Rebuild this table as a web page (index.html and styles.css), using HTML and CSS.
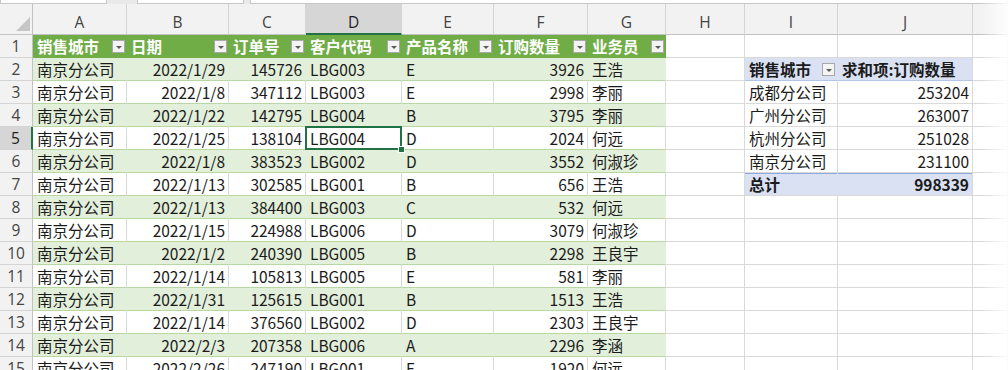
FILE: index.html
```html
<!DOCTYPE html>
<html lang="zh">
<head>
<meta charset="utf-8">
<title>Sheet</title>
<link rel="stylesheet" href="styles.css">
</head>
<body>
<div class="topbar">
  <div class="box b1"></div>
  <div class="gap g1"></div>
  <div class="box b2"></div>
  <div class="gap g2"></div>
  <div class="box b3"></div>
</div>
<div class="sheet">
  <div class="row hdr">
    <div class="corner"><span class="tri"></span></div>
    <div class="ch">A</div>
    <div class="ch">B</div>
    <div class="ch">C</div>
    <div class="ch act">D</div>
    <div class="ch">E</div>
    <div class="ch">F</div>
    <div class="ch">G</div>
    <div class="ch">H</div>
    <div class="ch">I</div>
    <div class="ch">J</div>
    <div class="ch last"></div>
  </div>

  <div class="row head">
    <div class="rh">1</div>
    <div class="t th">销售城市<span class="fb"></span></div>
    <div class="t th">日期<span class="fb"></span></div>
    <div class="t th">订单号<span class="fb"></span></div>
    <div class="t th">客户代码<span class="fb"></span></div>
    <div class="t th">产品名称<span class="fb"></span></div>
    <div class="t th">订购数量<span class="fb"></span></div>
    <div class="t th">业务员<span class="fb"></span></div>
    <div class="c"></div><div class="c"></div><div class="c"></div><div class="c"></div>
  </div>

  <div class="row g">
    <div class="rh">2</div>
    <div class="t">南京分公司</div><div class="t n">2022/1/29</div><div class="t n">145726</div><div class="t">LBG003</div><div class="t">E</div><div class="t n">3926</div><div class="t">王浩</div>
    <div class="c"></div>
    <div class="c pv ph">销售城市<span class="fb"></span></div>
    <div class="c pv ph">求和项:订购数量</div>
    <div class="c"></div>
  </div>

  <div class="row w">
    <div class="rh">3</div>
    <div class="t">南京分公司</div><div class="t n">2022/1/8</div><div class="t n">347112</div><div class="t">LBG003</div><div class="t">E</div><div class="t n">2998</div><div class="t">李丽</div>
    <div class="c"></div>
    <div class="c pv">成都分公司</div>
    <div class="c pv n">253204</div>
    <div class="c"></div>
  </div>

  <div class="row g">
    <div class="rh">4</div>
    <div class="t">南京分公司</div><div class="t n">2022/1/22</div><div class="t n">142795</div><div class="t">LBG004</div><div class="t">B</div><div class="t n">3795</div><div class="t">李丽</div>
    <div class="c"></div>
    <div class="c pv">广州分公司</div>
    <div class="c pv n">263007</div>
    <div class="c"></div>
  </div>

  <div class="row w">
    <div class="rh act">5</div>
    <div class="t">南京分公司</div><div class="t n">2022/1/25</div><div class="t n">138104</div><div class="t sel">LBG004</div><div class="t">D</div><div class="t n">2024</div><div class="t">何远</div>
    <div class="c"></div>
    <div class="c pv">杭州分公司</div>
    <div class="c pv n">251028</div>
    <div class="c"></div>
  </div>

  <div class="row g">
    <div class="rh">6</div>
    <div class="t">南京分公司</div><div class="t n">2022/1/8</div><div class="t n">383523</div><div class="t">LBG002</div><div class="t">D</div><div class="t n">3552</div><div class="t">何淑珍</div>
    <div class="c"></div>
    <div class="c pv">南京分公司</div>
    <div class="c pv n">231100</div>
    <div class="c"></div>
  </div>

  <div class="row w">
    <div class="rh">7</div>
    <div class="t">南京分公司</div><div class="t n">2022/1/13</div><div class="t n">302585</div><div class="t">LBG001</div><div class="t">B</div><div class="t n">656</div><div class="t">王浩</div>
    <div class="c"></div>
    <div class="c pv pt">总计</div>
    <div class="c pv pt n">998339</div>
    <div class="c"></div>
  </div>

  <div class="row g">
    <div class="rh">8</div>
    <div class="t">南京分公司</div><div class="t n">2022/1/13</div><div class="t n">384400</div><div class="t">LBG003</div><div class="t">C</div><div class="t n">532</div><div class="t">何远</div>
    <div class="c"></div><div class="c"></div><div class="c"></div><div class="c"></div>
  </div>

  <div class="row w">
    <div class="rh">9</div>
    <div class="t">南京分公司</div><div class="t n">2022/1/15</div><div class="t n">224988</div><div class="t">LBG006</div><div class="t">D</div><div class="t n">3079</div><div class="t">何淑珍</div>
    <div class="c"></div><div class="c"></div><div class="c"></div><div class="c"></div>
  </div>

  <div class="row g">
    <div class="rh">10</div>
    <div class="t">南京分公司</div><div class="t n">2022/1/2</div><div class="t n">240390</div><div class="t">LBG005</div><div class="t">B</div><div class="t n">2298</div><div class="t">王良宇</div>
    <div class="c"></div><div class="c"></div><div class="c"></div><div class="c"></div>
  </div>

  <div class="row w">
    <div class="rh">11</div>
    <div class="t">南京分公司</div><div class="t n">2022/1/14</div><div class="t n">105813</div><div class="t">LBG005</div><div class="t">E</div><div class="t n">581</div><div class="t">李丽</div>
    <div class="c"></div><div class="c"></div><div class="c"></div><div class="c"></div>
  </div>

  <div class="row g">
    <div class="rh">12</div>
    <div class="t">南京分公司</div><div class="t n">2022/1/31</div><div class="t n">125615</div><div class="t">LBG001</div><div class="t">B</div><div class="t n">1513</div><div class="t">王浩</div>
    <div class="c"></div><div class="c"></div><div class="c"></div><div class="c"></div>
  </div>

  <div class="row w">
    <div class="rh">13</div>
    <div class="t">南京分公司</div><div class="t n">2022/1/14</div><div class="t n">376560</div><div class="t">LBG002</div><div class="t">D</div><div class="t n">2303</div><div class="t">王良宇</div>
    <div class="c"></div><div class="c"></div><div class="c"></div><div class="c"></div>
  </div>

  <div class="row g">
    <div class="rh">14</div>
    <div class="t">南京分公司</div><div class="t n">2022/2/3</div><div class="t n">207358</div><div class="t">LBG006</div><div class="t">A</div><div class="t n">2296</div><div class="t">李涵</div>
    <div class="c"></div><div class="c"></div><div class="c"></div><div class="c"></div>
  </div>

  <div class="row w">
    <div class="rh">15</div>
    <div class="t">南京分公司</div><div class="t n">2022/2/26</div><div class="t n">247190</div><div class="t">LBG001</div><div class="t">E</div><div class="t n">1920</div><div class="t">何远</div>
    <div class="c"></div><div class="c"></div><div class="c"></div><div class="c"></div>
  </div>
</div>
<div class="fade"></div>
</body>
</html>
```

FILE: styles.css
```css
html, body {
  margin: 0;
  padding: 0;
}
body {
  width: 1008px;
  height: 370px;
  overflow: hidden;
  position: relative;
  background: #ffffff;
  font-family: "Noto Sans CJK SC", sans-serif;
  font-size: 15.5px;
  color: #1b1b1b;
}

.topbar {
  height: 4px;
  display: flex;
  background: #e9e9e9;
  box-sizing: border-box;
}
.topbar .box {
  background: #ffffff;
  border: 1px solid #c8c8c8;
  border-top: none;
  box-sizing: border-box;
  height: 4px;
}
.b1 { width: 107px; }
.g1 { width: 30px; }
.b2 { width: 107px; }
.g2 { width: 6px; }
.b3 { flex: 1; }

.sheet {
  display: grid;
  grid-template-columns: 33px 94px 102px 77px 96px 92px 94px 78px 79px 93px 135px 1fr;
  grid-template-rows: 31px repeat(15, 23px);
}
.row { display: contents; }

.sheet > .row > div {
  box-sizing: border-box;
  border-right: 1px solid #d9d9d9;
  border-bottom: 1px solid #d9d9d9;
  display: flex;
  align-items: center;
  white-space: nowrap;
  overflow: hidden;
  line-height: 22px;
}

/* column headers */
.row.hdr > div {
  background: #f2f2f2;
  border-right-color: #d4d4d4;
  border-bottom-color: #c2c2c2;
  justify-content: center;
  align-items: flex-start;
  padding-top: 7px;
  font-family: "Open Sans", "Noto Sans CJK SC", sans-serif;
  font-size: 15.5px;
  color: #444444;
}
.row.hdr > .corner {
  position: relative;
  border-right-color: #c2c2c2;
}
.corner .tri {
  position: absolute;
  right: 2px;
  bottom: 3px;
  width: 0;
  height: 0;
  border-left: 14px solid transparent;
  border-bottom: 14px solid #c6c6c6;
}
.row.hdr > .ch.act {
  background: #d6d6d6;
  color: #222222;
  border-bottom: 2px solid #217346;
}
.row.hdr > .ch.last {
  border-right: none;
}

/* row headers */
.sheet > .row > .rh {
  background: #f2f2f2;
  border-right-color: #c2c2c2;
  border-bottom-color: #d4d4d4;
  justify-content: center;
  font-family: "Open Sans", "Noto Sans CJK SC", sans-serif;
  font-size: 15.5px;
  color: #444444;
}
.sheet > .row > .rh.act {
  background: #d6d6d6;
  color: #222222;
  border-right: 2px solid #217346;
}

/* table cells */
.sheet > .row > .t {
  padding: 0 3px 0 4px;
  border-bottom-color: #b9d7a3;
}
.sheet > .row.g > .t {
  background: #e2efda;
  border-right-color: #e2efda;
}
.sheet > .row.w > .t {
  background: #ffffff;
  border-right-color: #d9d9d9;
}
.sheet > .row > .n {
  justify-content: flex-end;
}
.sheet > .row.head > .th {
  background: #70ad47;
  border-right-color: #70ad47;
  border-bottom-color: #70ad47;
  color: #ffffff;
  font-weight: 700;
  padding-right: 1px;
}

/* filter button */
.fb {
  margin-left: auto;
  width: 13px;
  height: 13px;
  box-sizing: border-box;
  background: #f4f4f4;
  border: 1px solid #a8a8a8;
  position: relative;
  flex: none;
}
.fb::after {
  content: "";
  position: absolute;
  left: 3px;
  top: 5px;
  width: 0;
  height: 0;
  border-left: 3px solid transparent;
  border-right: 3px solid transparent;
  border-top: 3px solid #5a5a5a;
}

/* selected cell */
.sheet > .row > .sel {
  overflow: visible;
  position: relative;
}
.sel::after {
  content: "";
  position: absolute;
  left: -1px;
  top: -1px;
  right: -1px;
  bottom: -1px;
  border: 2px solid #217346;
  pointer-events: none;
}
.sel::before {
  content: "";
  position: absolute;
  right: -4px;
  bottom: -4px;
  width: 5px;
  height: 5px;
  background: #217346;
  border: 1px solid #ffffff;
  z-index: 2;
}

/* pivot table */
.sheet > .row > .pv {
  padding: 0 3px 0 4px;
}
.sheet > .row > .pv.ph {
  background: #d9e1f2;
  border-right-color: #d9e1f2;
  border-bottom-color: #b4c6e7;
  font-weight: 700;
  padding-right: 2px;
}
.sheet > .row > .pv.ph + .pv.ph {
  border-right-color: #d9d9d9;
}
.sheet > .row > .pv.pt {
  background: #d9e1f2;
  border-right-color: #d9e1f2;
  box-shadow: inset 0 1px 0 #8ea9db;
  font-weight: 700;
}
.sheet > .row > .pv.pt + .pv.pt {
  border-right-color: #d9d9d9;
}

.fade {
  position: absolute;
  top: 0;
  right: 0;
  width: 28px;
  height: 100%;
  background: linear-gradient(to right, rgba(255, 255, 255, 0), rgba(255, 255, 255, 0.9));
  pointer-events: none;
}
```
